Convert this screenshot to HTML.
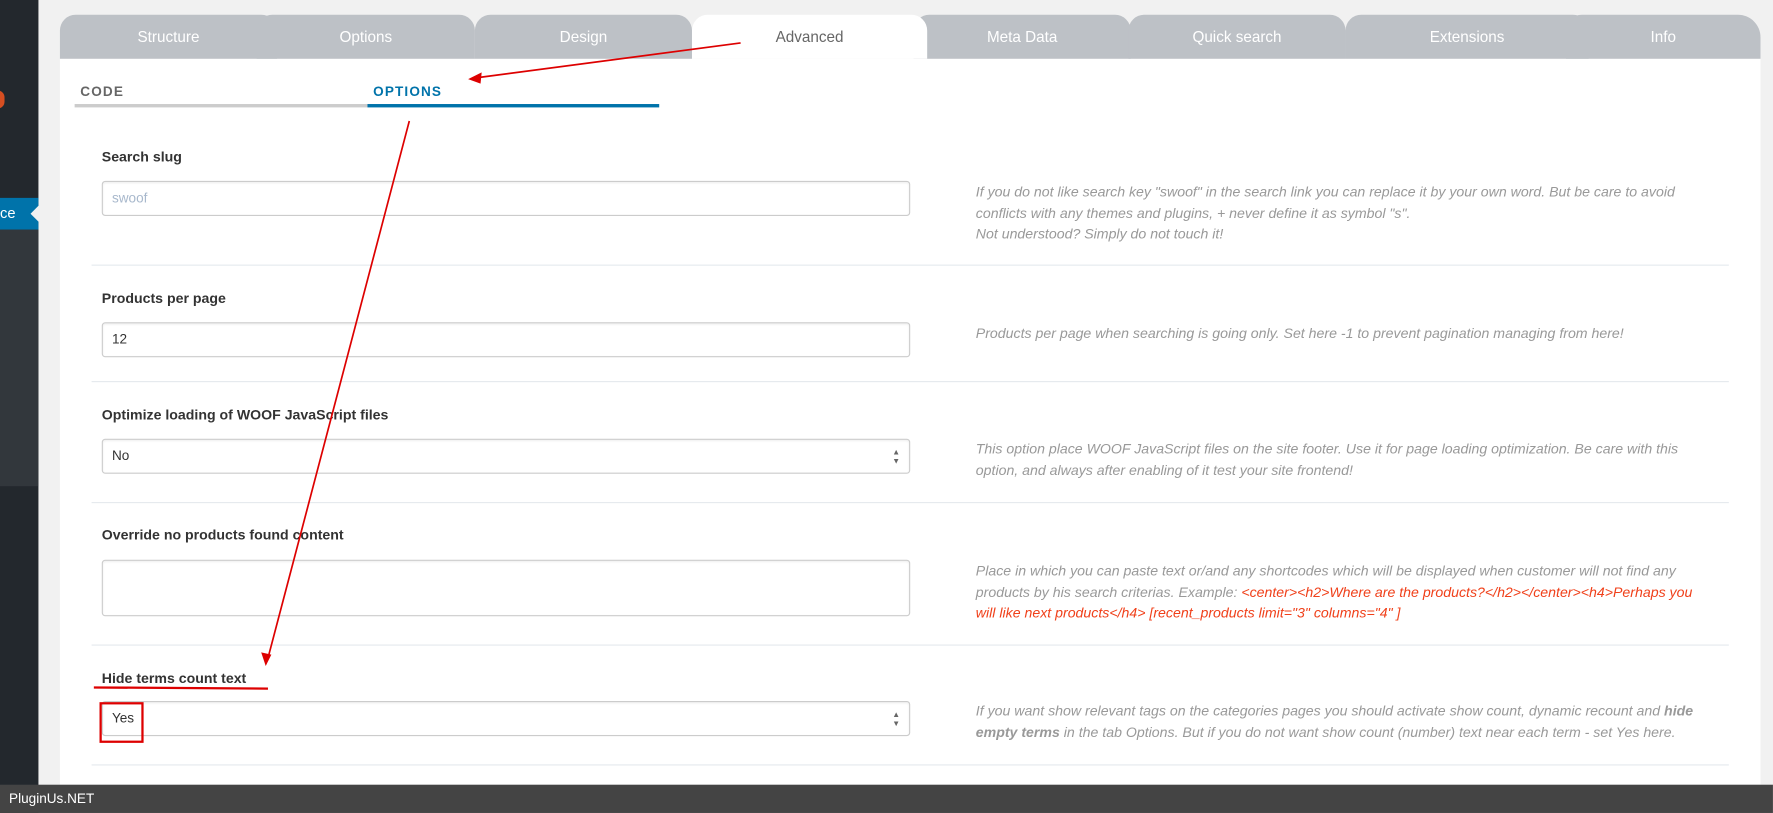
<!DOCTYPE html>
<html><head><meta charset="utf-8"><style>
html,body{margin:0;padding:0;width:1773px;height:813px;overflow:hidden;background:#f1f1f1}
#w{position:absolute;left:0;top:0;width:1568px;height:719px;transform:scale(1.1307);transform-origin:0 0;font-family:"Liberation Sans",sans-serif;background:#f1f1f1}
.a{position:absolute}
.tab{position:absolute;top:13px;height:39px;background:#bdc1c6;color:#fff;font-size:13.5px;text-align:center;line-height:40px;border-radius:14px 14px 0 0}
.lbl{position:absolute;left:90px;font-size:12.5px;font-weight:bold;color:#333}
.inp{position:absolute;left:90px;width:715px;border:1px solid #ccc;border-radius:3px;background:#fff;font-size:12px;color:#333;box-sizing:border-box;padding-left:8px;box-shadow:inset 0 1px 2px rgba(0,0,0,.07)}
.sep{position:absolute;left:81px;width:1448px;height:1px;background:#e5e9ee}
.d{position:absolute;left:863px;width:650px;font-size:12.5px;line-height:18.5px;color:#999;font-style:italic}
.arr{position:absolute;right:8px;font-size:7px;color:#666;line-height:8px}
</style></head><body><div id="w">
<div class="a" style="left:0;top:0;width:34px;height:719px;background:#23282d"></div>
<div class="a" style="left:0;top:203px;width:34px;height:227px;background:#32373c"></div>
<div class="a" style="left:-8px;top:80px;width:12px;height:16px;border-radius:8px;background:#d54e21"></div>
<div class="a" style="left:0;top:175px;width:34px;height:28px;background:#0073aa;color:#fff;font-size:13px;line-height:28px">ce</div>
<div class="a" style="left:27px;top:181px;width:0;height:0;border-top:8px solid transparent;border-bottom:8px solid transparent;border-right:8px solid #f1f1f1"></div>
<div class="a" style="left:53px;top:52px;width:1504px;height:642px;background:#fff"></div>
<div class="tab" style="left:53px;width:192px">Structure</div>
<div class="tab" style="left:227px;width:193px">Options</div>
<div class="tab" style="left:420px;width:192px">Design</div>
<div class="tab" style="left:808px;width:192px">Meta Data</div>
<div class="tab" style="left:998px;width:192px">Quick search</div>
<div class="tab" style="left:1190px;width:215px">Extensions</div>
<div class="tab" style="left:1385px;width:172px;border-radius:14px 20px 0 0">Info</div>
<div class="tab" style="left:612px;width:208px;background:#fff;color:#666;z-index:1">Advanced</div>
<div class="a" style="left:71px;top:74px;font-size:12px;font-weight:bold;letter-spacing:1px;color:#666">CODE</div>
<div class="a" style="left:330px;top:74px;font-size:12px;font-weight:bold;letter-spacing:1px;color:#0073aa">OPTIONS</div>
<div class="a" style="left:66px;top:92px;width:259px;height:3px;background:#ccc"></div>
<div class="a" style="left:325px;top:92px;width:258px;height:3px;background:#0073aa"></div>

<div class="lbl" style="top:132px">Search slug</div>
<div class="inp" style="top:160px;height:31px;line-height:29px;color:#a8b8cc">swoof</div>
<div class="d" style="top:161px">If you do not like search key "swoof" in the search link you can replace it by your own word. But be care to avoid conflicts with any themes and plugins, + never define it as symbol "s".<br>Not understood? Simply do not touch it!</div>
<div class="sep" style="top:234px"></div>

<div class="lbl" style="top:257px">Products per page</div>
<div class="inp" style="top:285px;height:31px;line-height:29px">12</div>
<div class="d" style="top:286px">Products per page when searching is going only. Set here -1 to prevent pagination managing from here!</div>
<div class="sep" style="top:337px"></div>

<div class="lbl" style="top:360px">Optimize loading of WOOF JavaScript files</div>
<div class="inp" style="top:388px;height:31px;line-height:29px">No<span class="arr" style="top:8px">▲<br>▼</span></div>
<div class="d" style="top:388px">This option place WOOF JavaScript files on the site footer. Use it for page loading optimization. Be care with this option, and always after enabling of it test your site frontend!</div>
<div class="sep" style="top:444px"></div>

<div class="lbl" style="top:466px">Override no products found content</div>
<div class="inp" style="top:495px;height:50px"></div>
<div class="d" style="top:496px">Place in which you can paste text or/and any shortcodes which will be displayed when customer will not find any products by his search criterias. Example: <span style="color:#f0401a">&lt;center&gt;&lt;h2&gt;Where are the products?&lt;/h2&gt;&lt;/center&gt;&lt;h4&gt;Perhaps you<br>will like next products&lt;/h4&gt; [recent_products limit="3" columns="4" ]</span></div>
<div class="sep" style="top:570px"></div>

<div class="lbl" style="top:593px">Hide terms count text</div>
<div class="inp" style="top:620px;height:31px;line-height:29px">Yes<span class="arr" style="top:8px">▲<br>▼</span></div>
<div class="d" style="top:620px">If you want show relevant tags on the categories pages you should activate show count, dynamic recount and <b>hide empty terms</b> in the tab Options. But if you do not want show count (number) text near each term - set Yes here.</div>
<div class="sep" style="top:676px"></div>

<div class="a" style="left:0;top:694px;width:1568px;height:25px;background:#444;color:#fff;font-size:12px;line-height:25px;padding-left:8px;box-sizing:border-box">PluginUs.NET</div>

<svg class="a" style="left:0;top:0;z-index:5" width="1568" height="719">
<g stroke="#d00" stroke-width="1.5" fill="#d00">
<line x1="655" y1="38" x2="420" y2="69"/>
<polygon points="414,70 426,64 425,74" stroke="none"/>
<line x1="362" y1="107" x2="237" y2="582"/>
<polygon points="235,589 231,577 240,579" stroke="none"/>
<line x1="83" y1="608" x2="237" y2="609" stroke-width="2"/>
<rect x="89" y="622" width="37" height="34" fill="none" stroke-width="2"/>
</g></svg>
</div></body></html>
